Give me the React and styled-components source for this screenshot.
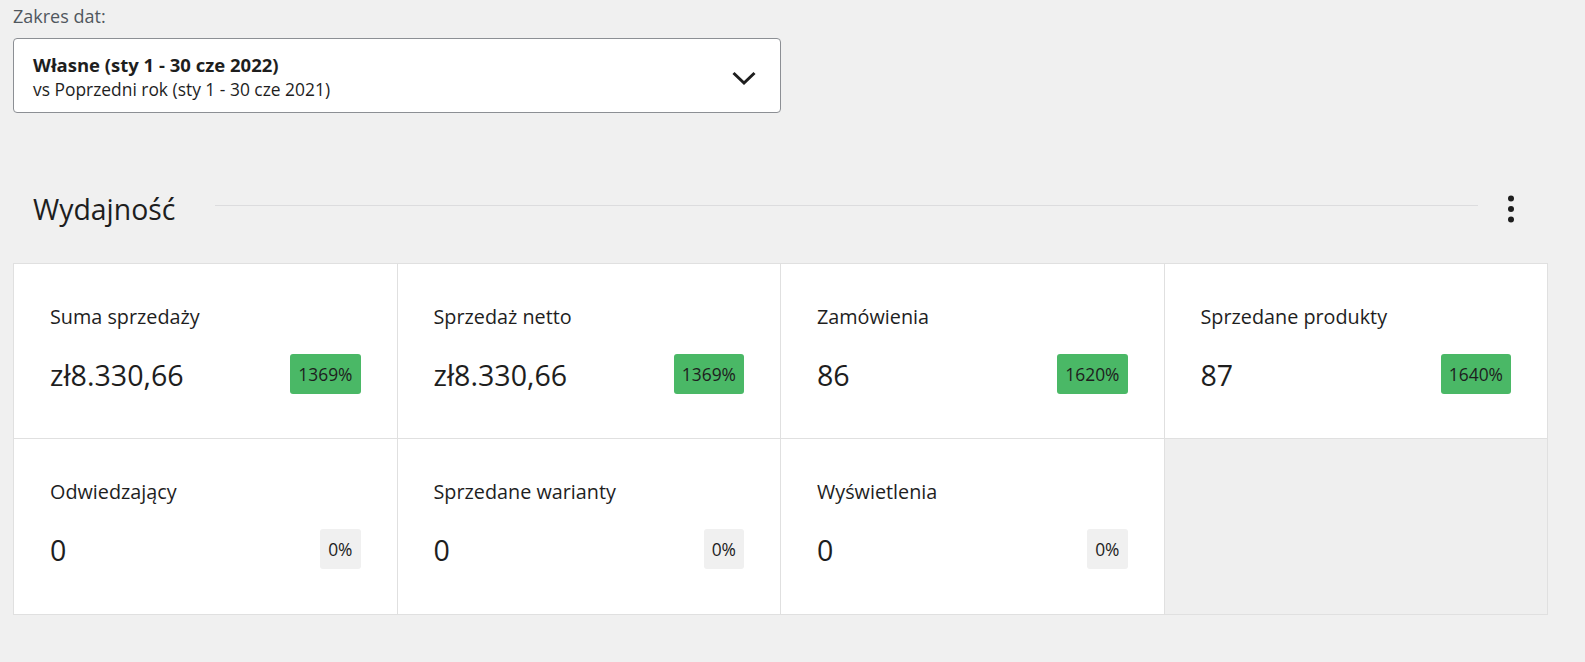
import React from "react";
import styled, { createGlobalStyle } from "styled-components";

const Global = createGlobalStyle`
  html, body { margin: 0; padding: 0; background: #f0f0f0; overflow: hidden; }
  body { font-family: "Open Sans", "Noto Sans", sans-serif; color: #1e1e1e; }
  * { box-sizing: border-box; }
`;

const Page = styled.div`
  height: 662px;
  overflow: hidden;
  padding: 4px 37px 0 13px;
`;

const FieldLabel = styled.div`
  font-size: 18px;
  line-height: 24px;
  color: #50575e;
  margin-bottom: 10px;
`;

const Dropdown = styled.button`
  width: 768px;
  height: 75px;
  display: flex;
  align-items: center;
  justify-content: space-between;
  padding: 2px 24px 0 19px;
  background: #fff;
  border: 1px solid #8c8f94;
  border-radius: 4px;
  font-family: inherit;
  color: #1e1e1e;
  text-align: left;
  cursor: pointer;
`;

const DropText = styled.div`
  display: flex;
  flex-direction: column;
`;

const DropMain = styled.span`
  font-size: 18.5px;
  font-weight: 700;
  line-height: 25px;
`;

const DropSub = styled.span`
  font-size: 17.4px;
  line-height: 25px;
`;

const Chevron = styled.svg`
  position: relative;
  top: 1px;
`;

const SectionHeader = styled.div`
  display: flex;
  align-items: center;
  margin-top: 72px;
  height: 48px;
  padding-left: 20px;
`;

const Title = styled.h2`
  margin: 0;
  font-size: 28.4px;
  font-weight: 400;
  line-height: 36px;
  color: #1e1e1e;
`;

const Rule = styled.div`
  flex: 1;
  height: 1px;
  background: #dcdcde;
  margin: 0 9px 0 40px;
  position: relative;
  top: -4px;
`;

const Kebab = styled.button`
  width: 48px;
  height: 48px;
  margin-right: 13px;
  border: 0;
  background: transparent;
  display: flex;
  align-items: center;
  justify-content: center;
  padding: 0;
  cursor: pointer;
`;

const Grid = styled.div`
  margin-top: 30px;
  display: grid;
  grid-template-columns: repeat(4, 1fr);
  border-top: 1px solid #e0e0e0;
  border-left: 1px solid #e0e0e0;
`;

const Cell = styled.div`
  background: ${(p) => (p.$empty ? "#efefef" : "#fff")};
  border-right: 1px solid #e0e0e0;
  border-bottom: 1px solid #e0e0e0;
  padding: 39px 36px 0 36px;
  height: ${(p) => p.$h}px;
`;

const Label = styled.div`
  font-size: 19.8px;
  line-height: 28px;
  color: #1e1e1e;
`;

const ValueRow = styled.div`
  margin-top: 25px;
  display: flex;
  align-items: center;
  justify-content: space-between;
  height: 42px;
`;

const Value = styled.div`
  font-size: 28.6px;
  line-height: 42px;
  position: relative;
  top: -2px;
`;

const Delta = styled.div`
  height: 40px;
  padding: 0 8px;
  display: flex;
  align-items: center;
  border-radius: 3px;
  font-size: 17.4px;
  background: ${(p) => (p.$up ? "#4ab866" : "#f0f0f0")};
  color: #1e1e1e;
  position: relative;
  top: -3px;
`;

const items = [
  { label: "Suma sprzedaży", value: "zł8.330,66", delta: "1369%", up: true },
  { label: "Sprzedaż netto", value: "zł8.330,66", delta: "1369%", up: true },
  { label: "Zamówienia", value: "86", delta: "1620%", up: true },
  { label: "Sprzedane produkty", value: "87", delta: "1640%", up: true },
  { label: "Odwiedzający", value: "0", delta: "0%", up: false },
  { label: "Sprzedane warianty", value: "0", delta: "0%", up: false },
  { label: "Wyświetlenia", value: "0", delta: "0%", up: false },
];

export default function App() {
  return (
    <>
      <Global />
      <Page>
        <FieldLabel>Zakres dat:</FieldLabel>
        <Dropdown>
          <DropText>
            <DropMain>Własne (sty 1 - 30 cze 2022)</DropMain>
            <DropSub>vs Poprzedni rok (sty 1 - 30 cze 2021)</DropSub>
          </DropText>
          <Chevron width="24" height="24" viewBox="0 0 24 24" fill="none">
            <path d="M1.5 7 L12 17 L22.5 7" stroke="#1e1e1e" strokeWidth="3" fill="none" />
          </Chevron>
        </Dropdown>

        <SectionHeader>
          <Title>Wydajność</Title>
          <Rule />
          <Kebab aria-label="Więcej">
            <svg width="8" height="28" viewBox="0 0 8 28">
              <circle cx="4" cy="3.4" r="3" fill="#1e1e1e" />
              <circle cx="4" cy="14" r="3" fill="#1e1e1e" />
              <circle cx="4" cy="24.6" r="3" fill="#1e1e1e" />
            </svg>
          </Kebab>
        </SectionHeader>

        <Grid>
          {items.map((it, i) => (
            <Cell key={it.label} $h={i < 4 ? 175 : 176}>
              <Label>{it.label}</Label>
              <ValueRow>
                <Value>{it.value}</Value>
                <Delta $up={it.up}>{it.delta}</Delta>
              </ValueRow>
            </Cell>
          ))}
          <Cell $empty $h={176} />
        </Grid>
      </Page>
    </>
  );
}
